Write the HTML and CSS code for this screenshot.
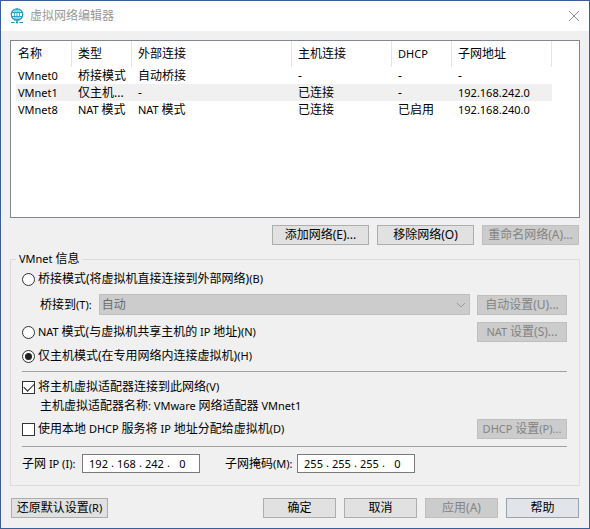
FILE: index.html
```html
<!DOCTYPE html>
<html lang="zh-CN">
<head>
    <meta charset="UTF-8">
    <meta name="viewport" content="width=device-width, initial-scale=1.0">
    <title>虚拟网络编辑器</title>
    <link rel="stylesheet" href="styles.css">
</head>
<body>
    <header class="titlebar">
        <svg class="logo" viewBox="0 0 14 16" width="14" height="16" fill="none" stroke="#1b9cc4">
            <circle cx="7" cy="6.5" r="5.7" stroke-width="1.3"/>
            <ellipse cx="7" cy="6.5" rx="2.5" ry="5.6" stroke-width=".9"/>
            <path d="M1.8 4.5h10.4M1.8 8.5h10.4M7 1v13" stroke-width=".9"/>
            <path d="M1 14.5h3.5M9.5 14.5h3.5" stroke-width="1.1"/>
            <circle cx="7" cy="14.4" r="1.1" fill="#1b9cc4" stroke="none"/>
        </svg>
        <h1>虚拟网络编辑器</h1>
        <button type="button" class="close" aria-label="关闭">
            <svg viewBox="0 0 12 12" width="12" height="12" fill="none" stroke="#8c8c8c"><path d="M1 1l10 10M11 1L1 11"/></svg>
        </button>
    </header>

    <main>
        <div class="list">
            <table>
                <colgroup>
                    <col class="c-name"><col class="c-type"><col class="c-ext"><col class="c-host"><col class="c-dhcp"><col class="c-subnet">
                </colgroup>
                <thead>
                    <tr><th>名称</th><th>类型</th><th>外部连接</th><th>主机连接</th><th><span class="en">DHCP</span></th><th>子网地址</th></tr>
                </thead>
                <tbody>
                    <tr><td><span class="en">VMnet0</span></td><td>桥接模式</td><td>自动桥接</td><td>-</td><td>-</td><td>-</td></tr>
                    <tr class="selected"><td><span class="en">VMnet1</span></td><td>仅主机...</td><td>-</td><td>已连接</td><td>-</td><td><span class="en">192.168.242.0</span></td></tr>
                    <tr><td><span class="en">VMnet8</span></td><td><span class="en">NAT </span>模式</td><td><span class="en">NAT </span>模式</td><td>已连接</td><td>已启用</td><td><span class="en">192.168.240.0</span></td></tr>
                </tbody>
            </table>
        </div>

        <div class="actions">
            <button type="button" class="wide">添加网络(E)...</button>
            <button type="button" class="wide">移除网络(O)</button>
            <button type="button" class="wide" disabled>重命名网络(A)...</button>
        </div>

        <fieldset>
            <legend><span class="en">VMnet </span>信息</legend>

            <div class="row first">
                <input type="radio" name="mode" id="bridged">
                <label for="bridged">桥接模式(将虚拟机直接连接到外部网络)<span class="en">(B)</span></label>
            </div>
            <div class="row bridge">
                <label for="bridgeTo">桥接到<span class="en">(T):</span></label>
                <div class="select">
                    <select id="bridgeTo" disabled><option>自动</option></select>
                    <svg viewBox="0 0 10 6" width="10" height="6" fill="none" stroke="#999"><path d="M1 1l4 4 4-4"/></svg>
                </div>
                <button type="button" class="set" disabled>自动设置(U)...</button>
            </div>
            <div class="row nat">
                <input type="radio" name="mode" id="nat">
                <label for="nat"><span class="en">NAT </span>模式(与虚拟机共享主机的<span class="en"> IP </span>地址)<span class="en">(N)</span></label>
                <button type="button" class="set" disabled><span class="en">NAT </span>设置(S)...</button>
            </div>
            <div class="row">
                <input type="radio" name="mode" id="hostonly" checked>
                <label for="hostonly">仅主机模式(在专用网络内连接虚拟机)<span class="en">(H)</span></label>
            </div>

            <hr>

            <div class="row">
                <input type="checkbox" id="adapter" checked>
                <label for="adapter">将主机虚拟适配器连接到此网络<span class="en">(V)</span></label>
            </div>
            <p class="adapter-name">主机虚拟适配器名称<span class="en">: VMware </span>网络适配器<span class="en"> VMnet1</span></p>
            <div class="row dhcp">
                <input type="checkbox" id="dhcp">
                <label for="dhcp">使用本地<span class="en"> DHCP </span>服务将<span class="en"> IP </span>地址分配给虚拟机<span class="en">(D)</span></label>
                <button type="button" class="set" disabled><span class="en">DHCP </span>设置<span class="en">(P)...</span></button>
            </div>

            <hr>

            <div class="row subnet">
                <label class="ip-label" for="ip1">子网<span class="en"> IP (I):</span></label>
                <div class="ip">
                    <input type="text" id="ip1" value="192">.<input type="text" aria-label="IP 2" value="168">.<input type="text" aria-label="IP 3" value="242">.<input type="text" aria-label="IP 4" value="0">
                </div>
                <label class="mask-label" for="mask1">子网掩码<span class="en">(M):</span></label>
                <div class="ip">
                    <input type="text" id="mask1" value="255">.<input type="text" aria-label="掩码 2" value="255">.<input type="text" aria-label="掩码 3" value="255">.<input type="text" aria-label="掩码 4" value="0">
                </div>
            </div>
        </fieldset>

        <footer>
            <button type="button" class="wide restore">还原默认设置<span class="en">(R)</span></button>
            <button type="button">确定</button>
            <button type="button">取消</button>
            <button type="button" disabled>应用(A)</button>
            <button type="button" class="help">帮助</button>
        </footer>
    </main>
</body>
</html>
```
FILE: styles.css
```css
* {
    box-sizing: border-box;
}

body {
    margin: 0;
    min-height: 100vh;
    border: 1px solid #3a5f97;
    background: #f0f0f0;
    color: #000;
    font-family: "Noto Sans", "Noto Sans CJK SC", sans-serif;
    font-size: 12px;
    line-height: 16px;
}

button, input, select {
    margin: 0;
    font: inherit;
    color: inherit;
}

/* latin text is one size smaller than the chinese text */
.en {
    font-size: 11px;
    white-space: pre;
}

/* title bar */
.titlebar {
    display: flex;
    align-items: center;
    height: 30px;
    padding: 0 9px;
    background: #fff;
}

.titlebar h1 {
    flex: 1;
    margin: 0 0 0 6px;
    font-size: 12px;
    font-weight: normal;
    color: #999;
}

.close {
    display: flex;
    width: 12px;
    height: 12px;
    padding: 0;
    border: none;
    background: none;
}

main {
    padding: 9px 9px 10px;
}

/* network list */
.list {
    min-height: 178px;
    padding: 0 27px 0 5px;
    border: 1px solid #828790;
    background: #fff;
}

table {
    width: 100%;
    table-layout: fixed;
    border-collapse: separate;
    border-spacing: 0;
}

.c-name { width: 56px; }
.c-type { width: 60px; }
.c-host { width: 100px; }
.c-dhcp { width: 60px; }
.c-subnet { width: 100px; }

th, td {
    padding: 0 0 0 6px;
    text-align: left;
    font-weight: normal;
    white-space: nowrap;
    overflow: hidden;
}

th {
    height: 26px;
    border-right: 1px solid #e5e5e5;
}

td {
    height: 17px;
}

th:first-child, td:first-child {
    padding-left: 2px;
}

.selected td {
    background: #f0f0f0;
}

/* buttons */
button {
    width: 73px;
    height: 20px;
    padding: 0;
    border: 1px solid #adadad;
    background: #e1e1e1;
    line-height: 16px;
    white-space: nowrap;
}

button:disabled {
    border-color: #bfbfbf;
    background: #ccc;
    color: #838383;
}

.wide {
    width: 97px;
}

.set {
    width: 90px;
    margin-left: auto;
}

.help {
    border-color: #98a3b0;
    background: #e1e4e8;
}

.actions {
    display: flex;
    justify-content: flex-end;
    gap: 8px;
    margin: 7px 1px 6px 0;
}

/* VMnet settings */
fieldset {
    min-width: 0;
    margin: 0;
    padding: 0 12px 12px 11px;
    border: 1px solid #dcdcdc;
}

legend {
    margin-left: -6px;
    padding: 0 3px;
}

.row {
    display: flex;
    align-items: center;
    min-height: 16px;
}

.row.first {
    margin: 4px 0 7px;
}

.bridge {
    padding-left: 18px;
    gap: 7px;
}

.nat {
    margin: 7px 0 6px;
}

.dhcp {
    margin-top: 5px;
}

input[type="radio"], input[type="checkbox"] {
    appearance: none;
    display: grid;
    place-items: center;
    flex: none;
    width: 13px;
    height: 13px;
    margin-right: 3px;
    border: 1px solid #333;
    background: #fff;
}

input[type="radio"] {
    border-radius: 50%;
}

input[type="radio"]:checked::before {
    content: "";
    width: 7px;
    height: 7px;
    border-radius: 50%;
    background: #222;
}

input[type="checkbox"]:checked::before {
    content: "";
    width: 9px;
    height: 5px;
    border: solid #222;
    border-width: 0 0 1px 1px;
    transform: translateY(-1px) rotate(-45deg);
}

.select {
    position: relative;
    flex: 1;
}

.select select {
    appearance: none;
    display: block;
    width: 100%;
    height: 21px;
    padding: 0 2px;
    border: 1px solid #bfbfbf;
    border-radius: 0;
    background: #ccc;
    color: #6d6d6d;
    opacity: 1;
}

.select svg {
    position: absolute;
    right: 4px;
    top: 8px;
}

hr {
    height: 1px;
    margin: 7px 0;
    border: none;
    background: #a0a0a0;
}

.adapter-name {
    margin: 3px 0 0 18px;
}

.ip-label {
    width: 60px;
}

.mask-label {
    width: 72px;
    margin-left: 25px;
}

.ip {
    display: flex;
    width: 118px;
    height: 19px;
    padding: 0 3px;
    border: 1px solid #7a7a7a;
    background: #fff;
    font-size: 11px;
}

.ip input {
    width: 25px;
    padding: 0;
    border: none;
    background: none;
    text-align: center;
}

footer {
    display: flex;
    gap: 8px;
    margin: 12px 1px 0;
}

.restore {
    margin-right: auto;
}
```
